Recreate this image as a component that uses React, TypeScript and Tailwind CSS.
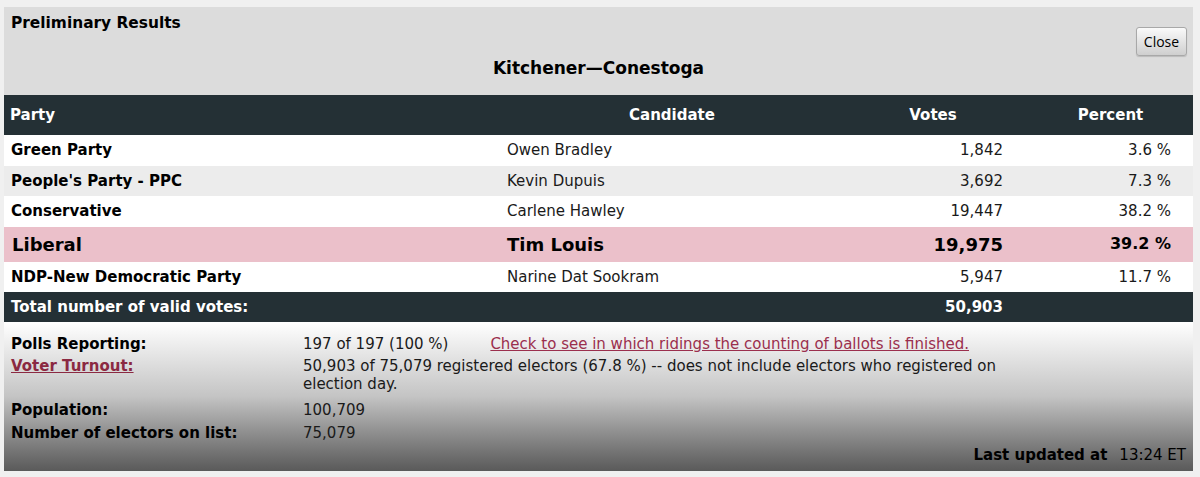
import React from 'react';

type Row = {
  party: string;
  candidate: string;
  votes: string;
  percent: string;
  bg: string;
  elected?: boolean;
};

const rows: Row[] = [
  { party: 'Green Party', candidate: 'Owen Bradley', votes: '1,842', percent: '3.6 %', bg: 'bg-white' },
  { party: "People's Party - PPC", candidate: 'Kevin Dupuis', votes: '3,692', percent: '7.3 %', bg: 'bg-[#ececec]' },
  { party: 'Conservative', candidate: 'Carlene Hawley', votes: '19,447', percent: '38.2 %', bg: 'bg-white' },
  { party: 'Liberal', candidate: 'Tim Louis', votes: '19,975', percent: '39.2 %', bg: 'bg-[#ebc0ca]', elected: true },
  { party: 'NDP-New Democratic Party', candidate: 'Narine Dat Sookram', votes: '5,947', percent: '11.7 %', bg: 'bg-white' },
];

// Verdana isn't installed; DejaVu Sans runs a bit narrower so sizes are bumped ~1px
const font = "font-['Verdana','DejaVu_Sans',sans-serif]";

export default function App() {
  return (
    <div className={`min-h-[477px] w-[1200px] bg-[#f0f0f0] pt-[7px] pl-[4px] ${font} text-[#1a1a1a]`}>
      <div className="w-[1189px] bg-[#dcdcdc]">
        {/* heading */}
        <div className="relative h-[88px]">
          <h1 className="pl-[7px] pt-[7px] text-[15.4px] font-bold leading-[19px] text-black">Preliminary Results</h1>
          <h2 className="mt-[25px] text-center text-[17px] font-bold leading-[21px] text-black">Kitchener—Conestoga</h2>
          <button className="absolute right-[6px] top-[20px] h-[29px] w-[51px] rounded-[3px] border border-[#a8a8a8] bg-gradient-to-b from-[#fafafa] to-[#cfcfcf] font-['Open_Sans',sans-serif] text-[14px] text-black shadow-[0_1px_1px_rgba(0,0,0,0.15)]">
            Close
          </button>
        </div>

        {/* results table */}
        <table className="w-full border-collapse text-[15px]">
          <colgroup>
            <col className="w-[496px]" />
            <col className="w-[348px]" />
            <col className="w-[176px]" />
            <col className="w-[169px]" />
          </colgroup>
          <thead>
            <tr className="h-[40px] bg-[#243035] text-white">
              <th className="pl-[6px] text-left font-bold">Party</th>
              <th className="pr-[4px] text-center font-bold">Candidate</th>
              <th className="pr-[6px] text-center font-bold">Votes</th>
              <th className="pl-[4px] text-center font-bold">Percent</th>
            </tr>
          </thead>
          <tbody>
            {rows.map((r) =>
              r.elected ? (
                <tr key={r.party} className={`h-[35px] ${r.bg} text-[18px] font-bold text-black`}>
                  <td className="pl-[8px]">{r.party}</td>
                  <td className="pl-[7px]">{r.candidate}</td>
                  <td className="pr-[21px] text-right">{r.votes}</td>
                  <td className="pr-[22px] text-right text-[16px]">{r.percent}</td>
                </tr>
              ) : (
                <tr key={r.party} className={`h-[30.5px] ${r.bg}`}>
                  <td className="pl-[7px] font-bold text-black">{r.party}</td>
                  <td className="pl-[7px]">{r.candidate}</td>
                  <td className="pr-[21px] text-right">{r.votes}</td>
                  <td className="pr-[22px] text-right">{r.percent}</td>
                </tr>
              )
            )}
            <tr className="h-[30px] bg-[#243035] font-bold text-white">
              <td className="pl-[7px]">Total number of valid votes:</td>
              <td />
              <td className="pr-[21px] text-right">50,903</td>
              <td />
            </tr>
          </tbody>
        </table>

        {/* summary */}
        <div className="bg-gradient-to-b from-[#ffffff] via-[#c4c4c4] to-[#5a5a5a] px-[7px] pt-[13px] pb-[7px] text-[15px] leading-[18px]">
          <div className="grid grid-cols-[292px_1fr] gap-y-[4px]">
            <div className="font-bold text-black">Polls Reporting:</div>
            <div>
              197 of 197 (100 %)
              <a href="#" className="ml-[42px] text-[#9b2f4d] underline">
                Check to see in which ridings the counting of ballots is finished.
              </a>
            </div>
            <a href="#" className="justify-self-start font-bold text-[#8b2942] underline">Voter Turnout:</a>
            <div className="max-w-[725px]">
              50,903 of 75,079 registered electors (67.8 %) -- does not include electors who registered on election day.
            </div>
            <div className="mt-[4px] font-bold text-black">Population:</div>
            <div className="mt-[4px]">100,709</div>
            <div className="mt-[1px] font-bold text-black">Number of electors on list:</div>
            <div className="mt-[1px]">75,079</div>
          </div>
          <div className="mt-[4px] text-right">
            <span className="font-bold text-black">Last updated at</span>
            <span className="ml-[12px] text-black">13:24 ET</span>
          </div>
        </div>
      </div>
    </div>
  );
}
